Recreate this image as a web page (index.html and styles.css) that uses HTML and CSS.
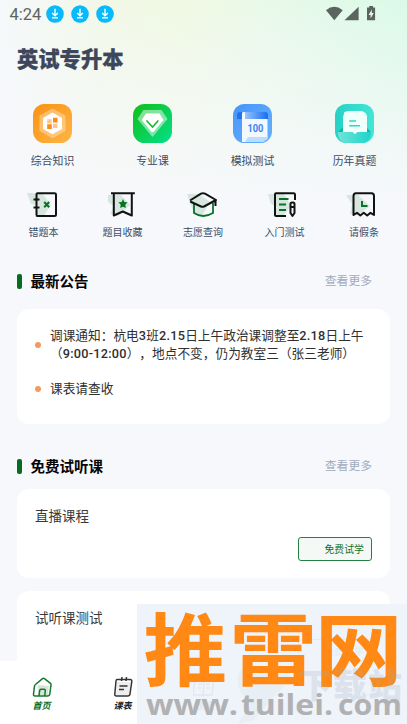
FILE: index.html
```html
<!DOCTYPE html>
<html lang="zh-CN">
<head>
<meta charset="utf-8">
<title>英试专升本</title>
<link rel="stylesheet" href="styles.css">
</head>
<body>
<div class="screen">
  <div class="status">
    <span class="clock">4:24</span>
    <svg class="dl" viewBox="0 0 18 18"><circle cx="9" cy="9" r="8.8" fill="#08b9fb"/><path d="M9 3.8v6.6M6.2 8L9 10.7 11.8 8M6 12.7h6" fill="none" stroke="#fff" stroke-width="1.4"/></svg>
    <svg class="dl" viewBox="0 0 18 18"><circle cx="9" cy="9" r="8.8" fill="#08b9fb"/><path d="M9 3.8v6.6M6.2 8L9 10.7 11.8 8M6 12.7h6" fill="none" stroke="#fff" stroke-width="1.4"/></svg>
    <svg class="dl" viewBox="0 0 18 18"><circle cx="9" cy="9" r="8.8" fill="#08b9fb"/><path d="M9 3.8v6.6M6.2 8L9 10.7 11.8 8M6 12.7h6" fill="none" stroke="#fff" stroke-width="1.4"/></svg>
    <svg class="signals" viewBox="0 0 50 16" fill="#5c645f"><path d="M0 4.2Q8.3-2.6 16.7 4.2L8.3 14.3z"/><path d="M18.5 14.3L32.6.8v13.5z"/><path d="M41 1.6h2.2V0h3.8v1.6h2.1v12.7H41z"/><path d="M45.8 3.6L42.6 9h2v3.6L47.7 7h-1.9z" fill="#e4f7ea"/></svg>
  </div>
  <h1>英试专升本</h1>

  <nav class="main-nav">
    <a><svg viewBox="0 0 39 39">
      <defs><linearGradient id="or" x1="0" y1="0" x2="1" y2="1"><stop stop-color="#fa9212"/><stop offset="1" stop-color="#ffb547"/></linearGradient></defs>
      <rect width="39" height="39" rx="11.5" fill="url(#or)"/><path d="M19.500 4.500L32.500 11.500V27L19.500 34.300 6.500 27V11.500z" fill="#fff" opacity=".34"/><path d="M19.500 8.500L29 14V25L19.500 30.300 10 25V14z" fill="#fff"/>
      <path d="M14.200 15.200h4.500v4h-4.500zM20 19.800h4.300v4.200H20z" fill="#ffc58b"/><path d="M20 13.800h4.500v4.600H20zM14.200 20.300h4.600v4.800h-4.600z" fill="#fa8b17"/></svg><span>综合知识</span></a>
    <a><svg viewBox="0 0 39 39">
      <defs><linearGradient id="gr" x1="0" y1="0" x2="1" y2="1"><stop stop-color="#13bd18"/><stop offset="1" stop-color="#03e18b"/></linearGradient></defs>
      <rect width="39" height="39" rx="11.5" fill="url(#gr)"/><path d="M10.500 6H28.500L34.500 15 19.500 33 4.500 15z" fill="#fff" opacity=".48"/><path d="M13 9.500H26.500L30.500 16 20.500 28H18.500L8.700 16z" fill="#fff"/><path d="M13.500 16.500L19.500 23 25.300 16.500" fill="none" stroke="#12bd2c" stroke-width="1.600"/></svg><span>专业课</span></a>
    <a><svg viewBox="0 0 39 39">
      <defs><linearGradient id="bl" x1="0" y1="0" x2="1" y2="1"><stop stop-color="#4794fb"/><stop offset="1" stop-color="#65b2ff"/></linearGradient><linearGradient id="roll"><stop stop-color="#a9ceff"/><stop offset="1" stop-color="#176df2"/></linearGradient></defs>
      <rect width="39" height="39" rx="11.500" fill="url(#bl)"/><path d="M4 15V11Q4 8 7 8H12V15z" fill="#2074ee"/><path d="M9 8H32Q35 8 35 11V15H9z" fill="url(#roll)"/><path d="M9 11Q9 8 12 8V15H34.500V34.500H14.500L13 38H9z" fill="#f3f8ff"/><path d="M15 33H34.500V35L30 38H12z" fill="#b9deff"/><text class="hundred" x="14.400" y="28.300" textLength="16" lengthAdjust="spacingAndGlyphs">100</text></svg><span>模拟测试</span></a>
    <a><svg viewBox="0 0 39 39">
      <defs><linearGradient id="te"><stop stop-color="#25d1c5"/><stop offset="1" stop-color="#45e5d6"/></linearGradient><linearGradient id="te2"><stop stop-color="#70e4d6"/><stop offset="1" stop-color="#1cd4cc"/></linearGradient></defs>
      <rect width="39" height="39" rx="11.500" fill="url(#te)"/><path d="M3 28L8 23H31L36 28z" fill="#12b6a9"/><path d="M8 28V13L9.500 8 13 7H27L30.500 9 32 12V28z" fill="#effffc"/><path d="M3 28H17.500L20 30.200 22.500 28H36V29Q35 38.500 27 39H11.500Q4 38.500 3 30z" fill="url(#te2)"/><path d="M17.500 28H22.500L20 30.200z" fill="#effffc"/><path d="M14.200 17H21M14.200 21.700H25" stroke="#31d6c5" stroke-width="1.600"/></svg><span>历年真题</span></a>
  </nav>

  <nav class="sub-nav">
    <a><svg viewBox="0 0 38 26"><path class="shade" d="M2 1h15l9 12-8 12h-8l4-11-8-2z"/><path class="ink" d="M12.500 1.200H29.500Q31 1.200 31 2.500V22.500Q31 24 29.500 24H12.500Q11.500 24 11.500 22.500V2.500Q11.500 1.200 12.500 1.200M8.500 7.500H14.500M8.500 15.500H14.500"/><path class="accent" d="M19.200 10l5 5.200m0-5.200l-5 5.200"/></svg><span>错题本</span></a>
    <a><svg viewBox="0 0 38 26"><path class="shade" d="M4 3h13l9 10-12 11-8-2 4-8-6-4z"/><path class="ink" d="M7 1.200H30.800M9.800 1.500V23.500L18.800 19.500 27.800 23.500V1.500"/><path d="M19 7l1.300 3 3.200.3-2.200 2.500.5 3.200-2.800-1.200-2.800 1.200.5-3.200-2.300-2.500 3.300-.3z" fill="#077326"/></svg><span>题目收藏</span></a>
    <a><svg viewBox="0 0 38 26"><path class="shade" d="M3 2h12l11 8-7 12h-9z"/><path class="accent thin" d="M10 11V21Q19 27 29 21V11"/><path class="ink" d="M6 8.500L17 1.700Q19 .8 21 1.700L32 8 20 14.500Q18.500 15.200 17 14.500L6.200 9.500M31.500 8V14"/></svg><span>志愿查询</span></a>
    <a><svg viewBox="0 0 38 26"><path class="shade" d="M2 2h16l7 12-8 10H7l4-9-6-3z"/><path class="ink" d="M29 8V2.500Q29 1.200 27.500 1.200H10Q9 1.200 9 2.500V23Q9 24 10 24H20M24.500 12Q24.500 10.500 26 10.500H27Q28.500 10.500 28.500 12V21L26.500 24 24.500 21zM24.500 15H28.500"/><path class="accent thin" d="M13 7H22.500M13 12.500H20M13 18H20"/></svg><span>入门测试</span></a>
    <a><svg viewBox="0 0 38 26"><path class="shade" d="M1 3h12l12 11-12 9-8-1 2-10z"/><path class="ink" d="M8.500 23V4Q8.500 1.200 11 1.200H26.500Q29 1.200 29 4V23L25.500 20.800 22.200 23.500 18.700 20.800 15.300 23.500 12 20.800z"/><path class="accent" d="M17 9V14H22.500"/></svg><span>请假条</span></a>
  </nav>

  <header class="heading"><h2>最新公告</h2><a>查看更多</a></header>
  <section class="card notices">
    <div class="notice"><i></i><p>调课通知：杭电<b>3</b>班<b>2.15</b>日上午政治课调整至<b>2.18</b>日上午<br>（<b>9:00-12:00</b>），地点不变，仍为教室三（张三老师）</p></div>
    <div class="notice"><i></i><p>课表请查收</p></div>
  </section>

  <header class="heading courses"><h2>免费试听课</h2><a>查看更多</a></header>
  <section class="card course"><h3>直播课程</h3><button>免费试学</button></section>
  <section class="card course"><h3>试听课测试</h3><button>免费试学</button></section>

  <nav class="tabs">
    <a class="active"><svg viewBox="0 0 22 22"><path d="M7 9l11 1-1 9H7z" fill="#d5e6d9" stroke="none"/><path d="M4.500 8.500L11.500 2.700Q12.500 2 13.500 2.700L19.500 7.300Q20.200 8 20 9L18.800 18Q18.500 20 16.500 20H4Q2.300 20 2.500 18L3.500 10Q3.600 9.200 4.500 8.500M8 20L8.700 14.500Q9 13.300 10 13.300H13Q14.500 13.300 14.300 14.500L13.700 20"/></svg><span>首页</span></a>
    <a><svg viewBox="0 0 22 22"><path d="M5 6h14l-2 13H4z" fill="#eee" stroke="none"/><path d="M5 3.500H18Q20 3.500 19.800 5.500L18 18Q17.700 20 15.700 20H4.500Q2.500 20 2.800 18L4 5Q4.200 3.500 5 3.500M10 1L9.500 5M14.500 1L14 5M7.500 10H15.500M7 13.500H12"/></svg><span>课表</span></a>
    <a><svg viewBox="0 0 22 22"><path d="M2 3H9Q11 3 11 5 12 3 14 3H21L19 19H12L10 20 8 19H0zM11 5L10 20M5 8h4M5 12h3M13 8h4M13 12h4"/></svg><span>题库</span></a>
  </nav>

  <svg class="watermark" viewBox="0 0 270 120">
    <rect width="270" height="120" fill="#eef2fa" opacity=".94"/>
    <path d="M101 72c3-15 30-14 34 3l20-13c-2 11-5 18-16 28l-22 26-16 4 13-20C107 93 99 85 101 72z" fill="#dce8ea" opacity=".4"/>
    <g class="brand"><text transform="translate(6.500 75.800) scale(.985 .93)">推</text><text transform="translate(92.500 75.800) scale(1.030 .93)">雷</text><text transform="translate(177.500 75.800) scale(1.040 .93)">网</text></g>
    <text class="ghost" x="161" y="94" textLength="104">下载站</text>
    <text class="url" y="111"><tspan x="9" textLength="92" lengthAdjust="spacingAndGlyphs">www.</tspan><tspan x="104" textLength="92" lengthAdjust="spacingAndGlyphs">tuilei.</tspan><tspan x="201" textLength="64" lengthAdjust="spacingAndGlyphs">com</tspan></text>
  </svg>
</div>
</body>
</html>
```
FILE: styles.css
```css
* { box-sizing: border-box; }
body { margin: 0; overflow: hidden; }
h1, h2, h3, p { margin: 0; }
.screen {
  position: relative;
  width: 407px;
  height: 724px;
  overflow: hidden;
  font-family: Roboto, "Noto Sans CJK SC", sans-serif;
  background:
    linear-gradient(to bottom, rgba(247,248,252,0) 0, rgba(247,248,252,.5) 90px, #f7f8fc 205px),
    linear-gradient(90deg, #f6f8fb 0, #f2f8e8 24%, #f0f9e3 43%, #e8f9e9 68%, #dafae7 100%);
}
.status { display: flex; align-items: center; height: 28px; padding-left: 9.5px; }
.clock { width: 36.5px; padding-top: 1px; font-size: 16.5px; line-height: 27px; color: #5c6460; }
.dl { width: 18px; height: 18px; margin-right: 7px; }
.signals { width: 50px; height: 16px; margin: 0 31px 0 auto; }
h1 {
  height: 64px;
  padding: 0 0 0 17px;
  font: 900 21.3px/60px "Noto Sans CJK SC", sans-serif;
  color: #3c475c;
  -webkit-text-stroke: .3px #3c475c;
}
.main-nav, .sub-nav { display: grid; justify-content: start; }
.main-nav { grid-template-columns: 100px 100px 100px 104px; padding: 12px 0 0 2.5px; height: 87px; }
.main-nav a, .sub-nav a, .tabs a { display: flex; flex-direction: column; align-items: center; white-space: nowrap; }
.main-nav svg { width: 39px; height: 39px; }
.main-nav span { margin-top: 10px; font-size: 10.9px; line-height: 17px; color: #414d63; }
.hundred { font: 700 10px Roboto, sans-serif; fill: #3983ef; }
.sub-nav { grid-template-columns: 79px 79px 82px 81px 78px; padding: 13px 0 0 4px; height: 82px; }
.sub-nav svg { width: 38px; height: 26px; }
.sub-nav span { margin-top: 7px; font-size: 10px; line-height: 16px; color: #414d63; }
.ink { fill: none; stroke: #101312; stroke-width: 2; stroke-linejoin: round; }
.accent { fill: none; stroke: #077326; stroke-width: 2; }
.thin { stroke-width: 1.8; }
.shade { fill: #bfd9ca; opacity: .58; }
.heading { display: flex; align-items: center; justify-content: space-between; height: 40px; padding: 0 35px 0 17px; }
.heading h2 { display: flex; align-items: center; font: 700 14.5px/20px "Noto Sans CJK SC", sans-serif; color: #050505; }
.heading h2::before { content: ""; width: 5px; height: 15px; margin-right: 8.500px; border-radius: 2px; background: #056e1e; }
.heading a { padding-bottom: 3px; font-size: 11.8px; color: #a1aabc; }
.courses { margin-top: 22px; }
.card { margin: 0 17px; background: #fff; border-radius: 12px; }
.notices { height: 115px; margin-top: 8px; padding: 17.500px 18px; }
.notice { display: flex; align-items: center; margin-bottom: 17px; }
.notice i { width: 6px; height: 6px; margin-right: 9px; border-radius: 50%; background: #f49a60; }
.notice p { font-size: 12.700px; line-height: 18px; color: #303030; white-space: nowrap; text-spacing-trim: space-all; }
.notice b { font-weight: 500; letter-spacing: .25px; }
.course { display: flex; flex-direction: column; height: 89px; margin-top: 3px; padding: 17px 18px; }
.course + .course { margin-top: 13px; }
.course h3 { font-size: 13.500px; font-weight: 400; line-height: 20px; color: #393939; }
.course button { align-self: flex-end; width: 74px; height: 24px; margin-top: 11px; padding: 0 7px 0 0; border: 1px solid #238044; border-radius: 3px; background: #f4f9f5; color: #14712c; font: 9.900px/20px "Noto Sans CJK SC", sans-serif; text-align: right; }
.tabs { position: absolute; left: 0; right: 0; bottom: 0; height: 63px; display: grid; grid-template-columns: repeat(5, 81px); padding: 15px 0 0 1px; background: #fff; }
.tabs svg { width: 22px; height: 22px; fill: none; stroke: #343434; stroke-width: 1.500; }
.tabs span { margin-top: 1px; font: italic 700 9px/14px "Noto Sans CJK SC", sans-serif; color: #222; }
.tabs .active svg { stroke: #16772e; }
.tabs .active span { color: #096c22; }
.watermark { position: absolute; right: 0; bottom: 0; width: 270px; height: 120px; }
.brand { font: 700 85px "Noto Sans CJK SC", sans-serif; fill: #ff8914; }
.ghost { font: 900 34px "Noto Sans CJK SC", sans-serif; fill: #9aabba; opacity: .22; }
.url { font: 700 29px "Open Sans", sans-serif; fill: #afb1b2; }
```
